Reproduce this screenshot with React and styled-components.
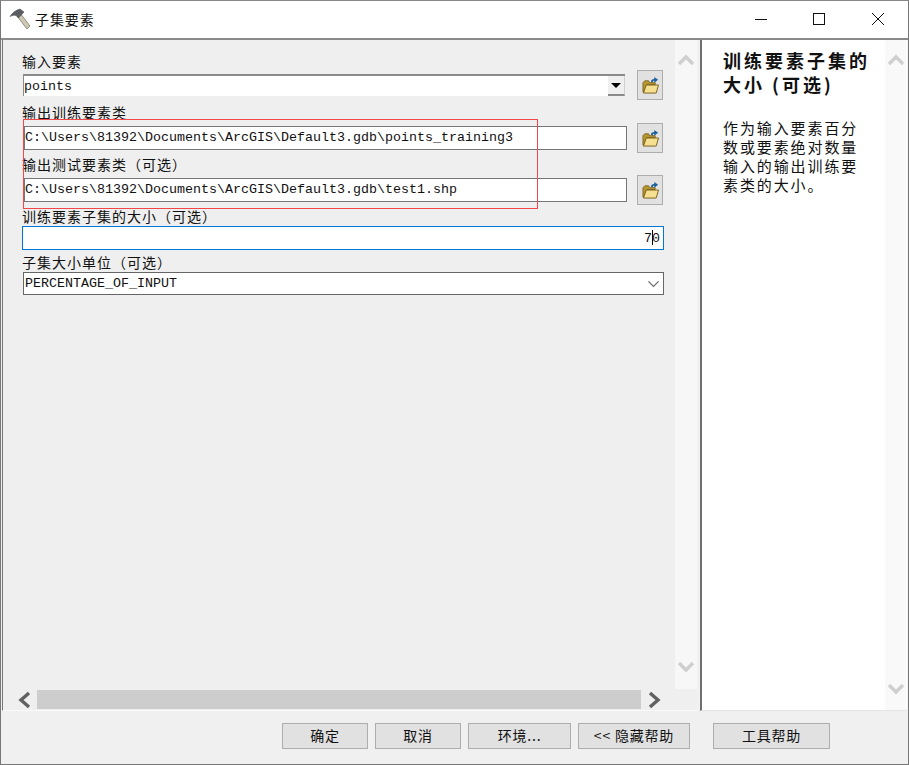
import React from 'react';
import styled, { createGlobalStyle } from 'styled-components';

const cjk = '"Noto Sans CJK SC", "Liberation Sans", sans-serif';
const mono = '"Liberation Mono", "Noto Sans CJK SC", monospace';

const GlobalStyle = createGlobalStyle`
  html, body { margin: 0; padding: 0; overflow: hidden; background: #fff; }
  * { box-sizing: border-box; }
`;

function Hammer() {
  return (
    <svg width="22" height="22" viewBox="0 0 22 22">
      <path d="M8 8 L11 5 L21 18 L18 21 Z" fill="#cfc9b4" stroke="#7d786c" strokeWidth="0.8" />
      <path d="M1 8.5 C3 5 7 2 11 1 L15 4 L9.5 10 L7 7.5 C5 7 3 7.5 1 8.5 Z" fill="#5a5d62" stroke="#3f4145" strokeWidth="0.5" />
    </svg>
  );
}

function FolderIcon() {
  return (
    <svg width="17" height="17" viewBox="0 0 18 18">
      <path d="M9.5 5 C9.5 3 11 2 13 2 L13 0 L17 3 L13 6 L13 4 C12 4 11.5 4 11.5 6 Z" fill="#1a5f9e" />
      <path d="M1 16 L1 6 L3 4 L7 4 L8 6 L14 6 L14 8 L5 8 L2 16 Z" fill="#b8962e" stroke="#6e5512" strokeWidth="0.8" />
      <path d="M1.5 17 L4.5 8.5 L17.5 8.5 L15 17 Z" fill="#f5df90" stroke="#7a6016" strokeWidth="1" />
    </svg>
  );
}

function Chevron({ dir, color, size = 18, weight = 3.4 }) {
  const paths = {
    up: 'M2 12 L9 5 L16 12',
    down: 'M2 6 L9 13 L16 6',
    left: 'M13 2 L5 9 L13 16',
    right: 'M5 2 L13 9 L5 16',
  };
  return (
    <svg width={size} height={size} viewBox="0 0 18 18">
      <path d={paths[dir]} fill="none" stroke={color} strokeWidth={weight} />
    </svg>
  );
}

export default function App() {
  return (
    <Window>
      <GlobalStyle />
      <TitleBar>
        <TitleIcon><Hammer /></TitleIcon>
        <Title>子集要素</Title>
        <WinControls>
          <WinButton>
            <svg width="14" height="14" viewBox="0 0 14 14"><path d="M1 7.5 H13" stroke="#111" /></svg>
          </WinButton>
          <WinButton>
            <svg width="14" height="14" viewBox="0 0 14 14"><rect x="1.5" y="1.5" width="11" height="11" fill="none" stroke="#111" /></svg>
          </WinButton>
          <WinButton $left={1}>
            <svg width="14" height="14" viewBox="0 0 14 14"><path d="M1 1 L13 13 M13 1 L1 13" stroke="#111" /></svg>
          </WinButton>
        </WinControls>
      </TitleBar>

      <Body>
        <LeftPane>
          <LeftTop>
            <Form>
              <Label $top={13}>输入要素</Label>
              <FieldRow $top={4} $gap={12}>
                <Combo>
                  <MonoText>points</MonoText>
                  <ComboButton><Triangle /></ComboButton>
                </Combo>
                <FolderButton $top={-4}><FolderIcon /></FolderButton>
              </FieldRow>
              <Label $top={7}>输出训练要素类</Label>
              <FieldRow $top={5} $gap={10}>
                <PathField><MonoText>C:\Users\81392\Documents\ArcGIS\Default3.gdb\points_training3</MonoText></PathField>
                <FolderButton $top={-3}><FolderIcon /></FolderButton>
              </FieldRow>
              <Label $top={7}>输出测试要素类（可选）</Label>
              <FieldRow $top={5} $gap={10}>
                <PathField><MonoText>C:\Users\81392\Documents\ArcGIS\Default3.gdb\test1.shp</MonoText></PathField>
                <FolderButton $top={-3}><FolderIcon /></FolderButton>
              </FieldRow>
              <Label $top={7}>训练要素子集的大小（可选）</Label>
              <SizeField>
                <MonoText>7<Caret />0</MonoText>
              </SizeField>
              <Label $top={4}>子集大小单位（可选）</Label>
              <SelectField>
                <MonoText>PERCENTAGE_OF_INPUT</MonoText>
                <Chevron dir="down" color="#666" size={13} weight={1.6} />
              </SelectField>
              <RedBox />
            </Form>
            <VScroll>
              <Chevron dir="up" color="#cfcfcf" />
              <Chevron dir="down" color="#cfcfcf" />
            </VScroll>
          </LeftTop>
          <HScroll>
            <HArrow><Chevron dir="left" color="#606060" /></HArrow>
            <HThumb />
            <HArrow><Chevron dir="right" color="#606060" /></HArrow>
          </HScroll>
        </LeftPane>

        <HelpPane>
          <HelpText>
            <HelpTitle>训练要素子集的<br />大小 (可选)</HelpTitle>
            <HelpBody>作为输入要素百分<br />数或要素绝对数量<br />输入的输出训练要<br />素类的大小。</HelpBody>
          </HelpText>
          <HelpScroll>
            <Chevron dir="up" color="#cfcfcf" />
            <Chevron dir="down" color="#cfcfcf" />
          </HelpScroll>
        </HelpPane>
      </Body>

      <Footer>
        <Button $w={86}>确定</Button>
        <Button $w={86}>取消</Button>
        <Button $w={103}>环境...</Button>
        <Button $w={112}>&lt;&lt; 隐藏帮助</Button>
        <Button $w={117} $left={16}>工具帮助</Button>
      </Footer>
    </Window>
  );
}

const Window = styled.div`
  width: 909px;
  height: 765px;
  display: flex;
  flex-direction: column;
  background: #f0f0f0;
  border: 1px solid #777;
  border-top-color: #888;
  font-family: ${cjk};
`;

const TitleBar = styled.div`
  height: 39px;
  flex: none;
  display: flex;
  align-items: center;
  background: #fff;
  border-bottom: 2px solid #8a8a8a;
  padding: 0 0 2px 8px;
`;

const TitleIcon = styled.div`
  width: 22px;
  height: 22px;
`;

const Title = styled.div`
  margin-left: 4px;
  font-size: 14px;
  letter-spacing: 0.9px;
  color: #111;
`;

const WinControls = styled.div`
  margin-left: auto;
  display: flex;
  padding-right: 23px;
  gap: 44px;
`;

const WinButton = styled.div`
  width: 14px;
  height: 14px;
  margin-left: ${(p) => p.$left || 0}px;
  display: flex;
`;

const Body = styled.div`
  height: 671px;
  flex: none;
  display: flex;
  background: #f0f0f0;
  padding-left: 1px;
`;

const LeftPane = styled.div`
  width: 695px;
  display: flex;
  flex-direction: column;
  border-left: 1px solid #777;
  border-bottom: 1px solid #fafafa;
`;

const LeftTop = styled.div`
  height: 649px;
  display: flex;
`;

const Form = styled.div`
  position: relative;
  width: 672px;
  padding-left: 20px;
  background: #efefef;
`;

const Label = styled.div`
  margin: ${(p) => p.$top}px 0 0 -1px;
  height: 17px;
  line-height: 17px;
  font-size: 14px;
  letter-spacing: 1px;
  color: #111;
  white-space: nowrap;
`;

const FieldRow = styled.div`
  margin-top: ${(p) => p.$top}px;
  width: 641px;
  height: 23px;
  display: flex;
  gap: ${(p) => p.$gap}px;
`;

const MonoText = styled.span`
  font-family: ${mono};
  font-size: 13.33px;
  color: #111;
  white-space: pre;
`;

const Combo = styled.div`
  width: 602px;
  height: 22px;
  flex: none;
  display: flex;
  align-items: center;
  justify-content: space-between;
  background: #fff;
  border-top: 2px solid #8a8a8a;
  border-left: 1px solid #8a8a8a;
`;

const ComboButton = styled.div`
  width: 17px;
  height: 20px;
  display: flex;
  align-items: center;
  justify-content: center;
  background: #efefef;
  border-bottom: 2px solid #8a8a8a;
  border-right: 1px solid #d0d0d0;
`;

const Triangle = styled.div`
  width: 0;
  height: 0;
  border-left: 5px solid transparent;
  border-right: 5px solid transparent;
  border-top: 5px solid #000;
`;

const PathField = styled.div`
  width: 604px;
  height: 24px;
  flex: none;
  display: flex;
  align-items: center;
  padding: 0 0 2px 0;
  background: #fff;
  border: 1px solid #777;
  border-left-width: 2px;
`;

const FolderButton = styled.div`
  width: 26px;
  height: 30px;
  flex: none;
  margin-top: ${(p) => p.$top}px;
  display: flex;
  align-items: center;
  justify-content: center;
  background: #e1e1e1;
  border: 1px solid #adadad;
`;

const SizeField = styled.div`
  margin-top: 1px;
  margin-left: -1px;
  width: 642px;
  height: 24px;
  display: flex;
  align-items: center;
  justify-content: flex-end;
  padding-right: 3px;
  background: #fff;
  border: 1px solid #0078d7;
`;

const Caret = styled.span`
  display: inline-block;
  width: 1px;
  height: 15px;
  margin: 0 -1px 0 0;
  vertical-align: -3px;
  background: #000;
`;

const SelectField = styled.div`
  margin-top: 1px;
  width: 641px;
  height: 23px;
  display: flex;
  align-items: center;
  justify-content: space-between;
  padding: 0 3px 0 1px;
  background: #fff;
  border: 1px solid #666;
`;

const RedBox = styled.div`
  position: absolute;
  left: 20px;
  top: 79px;
  width: 515px;
  height: 90px;
  border: 1px solid #f04848;
  pointer-events: none;
`;

const VScroll = styled.div`
  width: 22px;
  background: #f7f7f7;
  display: flex;
  flex-direction: column;
  align-items: center;
  justify-content: space-between;
  padding: 12px 0 14px;
`;

const HScroll = styled.div`
  flex: 1;
  display: flex;
  align-items: center;
  padding-left: 13px;
  background: #efefef;
`;

const HArrow = styled.div`
  width: 18px;
  height: 19px;
  display: flex;
  align-items: center;
  justify-content: center;
`;

const HThumb = styled.div`
  width: 604px;
  height: 19px;
  margin: 0 4px 0 3px;
  background: #cdcdcd;
`;

const HelpPane = styled.div`
  width: 207px;
  margin: 0 1px 0 3px;
  display: flex;
  background: #fff;
  border-left: 2px solid #707070;
  border-bottom: 1px solid #e4e4e4;
`;

const HelpText = styled.div`
  width: 183px;
  padding: 8px 0 0 21px;
  color: #111;
`;

const HelpTitle = styled.div`
  font-size: 18px;
  font-weight: 700;
  line-height: 24px;
  letter-spacing: 3px;
  white-space: nowrap;
`;

const HelpBody = styled.div`
  margin-top: 22px;
  font-size: 15px;
  line-height: 19px;
  letter-spacing: 1.9px;
  white-space: nowrap;
`;

const HelpScroll = styled.div`
  width: 21px;
  background: #f9f9f9;
  display: flex;
  flex-direction: column;
  align-items: center;
  justify-content: space-between;
  padding: 12px 0 13px;
`;

const Footer = styled.div`
  flex: 1;
  display: flex;
  align-items: flex-start;
  gap: 7px;
  padding: 12px 0 0 281px;
  background: #f0f0f0;
`;

const Button = styled.div`
  width: ${(p) => p.$w}px;
  height: 26px;
  margin-left: ${(p) => p.$left || 0}px;
  padding-bottom: 3px;
  display: flex;
  align-items: center;
  justify-content: center;
  font-size: 14px;
  letter-spacing: 0.8px;
  color: #111;
  background: #e1e1e1;
  border: 1px solid #adadad;
  white-space: nowrap;
`;
